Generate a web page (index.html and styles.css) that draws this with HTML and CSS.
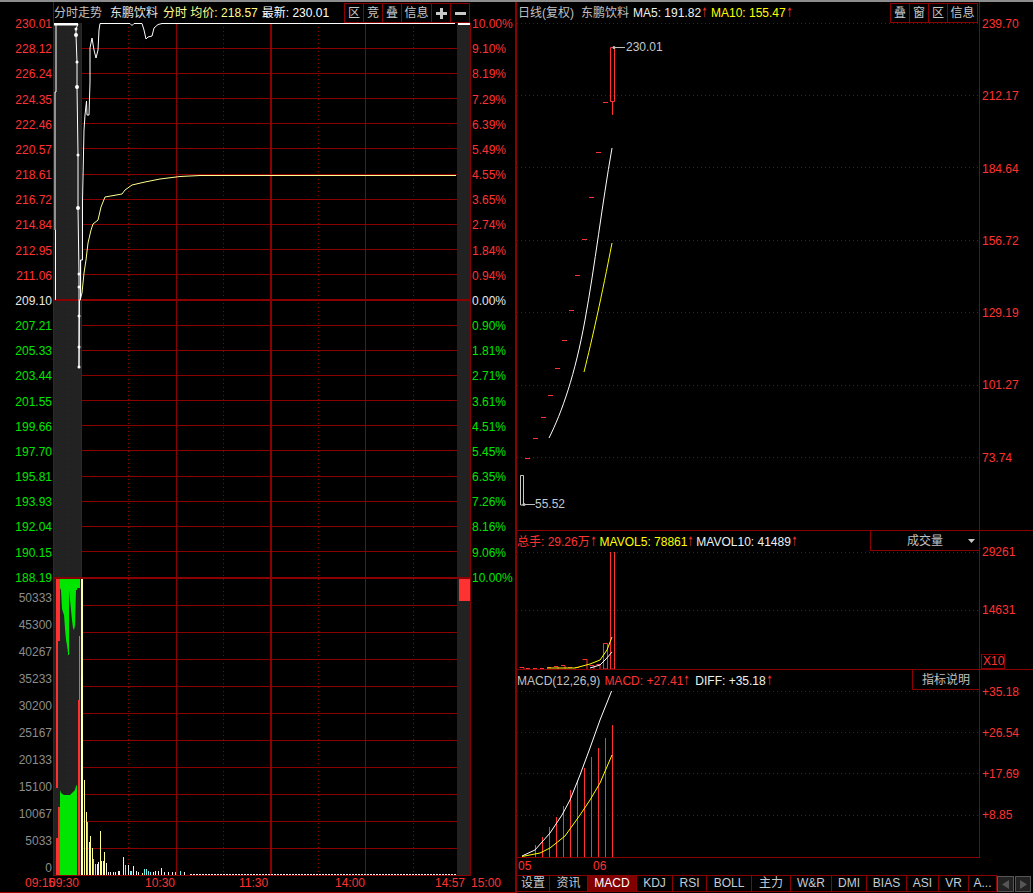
FILE: index.html
```html
<!DOCTYPE html>
<html lang="zh-CN">

<head>
    <meta charset="UTF-8">
    <meta name="viewport" content="width=device-width, initial-scale=1.0">
    <title>东鹏饮料</title>
    <link rel="stylesheet" href="styles.css">
</head>

<body>
    <div class="topbar"></div>
    <div class="terminal">

        <!-- partie gauche : intraday -->
        <section class="intraday">
            <div class="axis axis-left">
                <div class="axis-price">
                    <span class="up-text">230.01</span><span class="up-text">228.12</span><span class="up-text">226.24</span><span class="up-text">224.35</span><span class="up-text">222.46</span><span class="up-text">220.57</span><span class="up-text">218.61</span><span class="up-text">216.72</span><span class="up-text">214.84</span><span class="up-text">212.95</span><span class="up-text">211.06</span>
                    <span class="flat-text">209.10</span>
                    <span class="down-text">207.21</span><span class="down-text">205.33</span><span class="down-text">203.44</span><span class="down-text">201.55</span><span class="down-text">199.66</span><span class="down-text">197.70</span><span class="down-text">195.81</span><span class="down-text">193.93</span><span class="down-text">192.04</span><span class="down-text">190.15</span><span class="down-text">188.19</span>
                </div>
                <div class="axis-volume">
                    <span>50333</span><span>45300</span><span>40267</span><span>35233</span><span>30200</span><span>25167</span><span>20133</span><span>15100</span><span>10067</span><span>5033</span><span>0</span>
                </div>
            </div>

            <div class="intraday-main">
                <div class="chart-header">
                    <span class="title">分时走势</span>
                    <span class="stock">东鹏饮料</span>
                    <span class="avg">分时 均价: 218.57</span>
                    <span class="last">最新: 230.01</span>
                    <div class="btn-group">
                        <button class="btn">区</button>
                        <button class="btn">竞</button>
                        <button class="btn">叠</button>
                        <button class="btn btn-wide">信息</button>
                        <button class="btn"><svg width="11" height="11" viewBox="0 0 11 11"><path class="icon-fill" d="M4 0h3v4h4v3H7v4H4V7H0V4h4z"/></svg></button>
                        <button class="btn"><svg width="11" height="11" viewBox="0 0 11 11"><path class="icon-fill" d="M0 4h11v3H0z"/></svg></button>
                    </div>
                </div>

                <svg class="chart" width="417" height="853" viewBox="54 23 417 853">
                    <rect class="strip" x="54" y="23" width="27" height="853"/>
                    <rect class="strip" x="457" y="23" width="13" height="853"/>
                    <path class="grid-dot" d="M67.5 23V876M128.5 23V876M223.5 23V876M318.5 23V876M413.5 23V876"/>
                    <path class="grid" d="M81 48.5H457M81 73.5H457M81 98.5H457M81 123.5H457M81 148.5H457M81 174.5H457M81 199.5H457M81 224.5H457M81 249.5H457M81 274.5H457M81 325.5H457M81 350.5H457M81 375.5H457M81 400.5H457M81 425.5H457M81 450.5H457M81 476.5H457M81 501.5H457M81 526.5H457M81 551.5H457"/>
                    <path class="grid" d="M81 605.5H457M81 632.5H457M81 659.5H457M81 686.5H457M81 713.5H457M81 740.5H457M81 767.5H457M81 794.5H457M81 821.5H457M81 848.5H457M54 875.5H471"/>
                    <path class="grid" d="M81.5 23V876M176.5 23V876M365.5 23V876M470.5 23V876"/>
                    <path class="grid-thick" d="M54 300H471M54 578H471M271 23V876"/>

                    <!-- volumes -->
                    <rect class="fill-red" x="459" y="579" width="11" height="22"/>
                    <path class="fill-red" d="M56 579H60V641H58V788H56zM56 838H58V807H60V875H56zM78 579H80V584H78zM78 700H80V875H78z"/>
                    <path class="fill-green" d="M60 579H77V590H76L75 625 74 630 73 628 72 620 71 610 70 600 69 590V655H68V653L67 645 66 640 65 628 64 615 63 612 62 609 61 590 60 588z"/>
                    <path class="fill-green" d="M60 875V790L61 793 64 795H70L72 793 75 790 76 786 77 785V875zM77 579H80V588H77zM79 636H80V700H79z"/>
                    <rect class="fill-pale" x="81" y="579" width="2" height="296"/>
                    <rect class="fill-white" x="81" y="676" width="1" height="199"/>
                    <path class="bar-pale" d="M84.5 780V875M86.5 812V875M89.5 842V875M90.5 836V875M92.5 848V875M97.5 864V875M100.5 831V875M101.5 861V875M103.5 861V875M104.5 852V875M119.5 871V875M133.5 866V875M161.5 868V875M155.5 871V875M142.5 873V875"/>
                    <path class="bar-cyan" d="M87.5 822V875M93.5 859V875M95.5 864V875M125.5 865V875M130.5 871V875M131.5 871V875M144.5 869V875M146.5 869V875M148.5 871V875M150.5 872V875M175.5 872V875M180.5 871V875"/>
                    <path class="bar-white" d="M98.5 862V875M106.5 863V875M108.5 872V875M110.5 872V875M113.5 872V875M115.5 872V875M118.5 871V875M123.5 857V875M128.5 865V875M136.5 871V875M138.5 872V875M153.5 872V875M158.5 871V875M164.5 872V875M168.5 872V875M172.5 872V875M184.5 872V875"/>
                    <path class="bar-dash" d="M190 874.5H456"/>

                    <!-- prix et moyenne -->
                    <path class="line-avg" d="M80 300L82 293 84 273 86 260 88 243 91 230 93 224 98 220 101 207 105 197 122 194 125 190 132 185 145 182 160 179 180 176.5 200 175.5H456"/>
                    <path class="line-price" d="M55.5 300V230H55V92H56V24H78L76 29 76 35 77 62 77 87 78 154 78 208 79 274 79 287 79 316 79 347 79 367 79.5 300H80.5V260H82.5V201L84 130 85 115 86.5 101 87 115H89L90 82 90 48 92 38 94 50 96 58 98 50 99 30 100 23.5H130L132 25.5 134 23.5H142L144 30 146 39 148 37 152 36 154 28 158 24.5 162 23.5H455"/>
                    <path class="line-top" d="M54 24H78"/>
                    <path class="line-end" d="M458 24H470"/>
                    <g class="dots">
                        <circle cx="76" cy="29" r="1.5"/><circle cx="76" cy="35" r="2"/><circle cx="77" cy="62" r="1.5"/><circle cx="77" cy="87" r="2"/>
                        <circle cx="78" cy="155" r="1.5"/><circle cx="78" cy="208" r="2"/><circle cx="79" cy="274" r="1.5"/><circle cx="79" cy="287" r="1.5"/>
                        <circle cx="79" cy="316" r="1.5"/><circle cx="79" cy="347" r="1.5"/><circle cx="79" cy="367" r="1.5"/>
                    </g>
                </svg>
            </div>

            <div class="axis axis-right">
                <span class="up-text">10.00%</span><span class="up-text">9.10%</span><span class="up-text">8.19%</span><span class="up-text">7.29%</span><span class="up-text">6.39%</span><span class="up-text">5.49%</span><span class="up-text">4.55%</span><span class="up-text">3.65%</span><span class="up-text">2.74%</span><span class="up-text">1.84%</span><span class="up-text">0.94%</span>
                <span class="flat-text">0.00%</span>
                <span class="down-text">0.90%</span><span class="down-text">1.81%</span><span class="down-text">2.71%</span><span class="down-text">3.61%</span><span class="down-text">4.51%</span><span class="down-text">5.45%</span><span class="down-text">6.35%</span><span class="down-text">7.26%</span><span class="down-text">8.16%</span><span class="down-text">9.06%</span><span class="down-text">10.00%</span>
            </div>

            <div class="time-axis">
                <span>09:15</span><span>09:30</span><span>10:30</span><span>11:30</span><span>14:00</span><span>14:57</span><span>15:00</span>
            </div>
        </section>

        <!-- partie droite : journalier -->
        <section class="daily">
            <div class="pane pane-kline">
                <div class="plot">
                    <div class="chart-header">
                        <span class="title title-daily">日线(复权)</span>
                        <span class="title stock-daily">东鹏饮料</span>
                        <span class="ma-white">MA5: 191.82<i class="arrow">↑</i></span>
                        <span class="ma-yellow ma-gap">MA10: 155.47<i class="arrow">↑</i></span>
                        <div class="btn-group">
                            <button class="btn">叠</button>
                            <button class="btn">窗</button>
                            <button class="btn">区</button>
                            <button class="btn btn-wide">信息</button>
                        </div>
                    </div>
                    <svg class="chart" width="462" height="507" viewBox="517 23 462 507">
                        <path class="grid-dot" d="M517 23.5H979M517 95.5H979M517 167.5H979M517 240.5H979M517 312.5H979M517 385.5H979M517 457.5H979"/>
                        <path class="candle-first" d="M520.5 475.5H523.5V505H520.5z"/>
                        <path class="candle" d="M525 458.5H530M533 438.5H538M541 417.5H546M548 395.5H553M555 368.5H560M562 340.5H567M569 310.5H574M575 275.5H580M582 239.5H587M596 152.5H601M589 197.5H594M603 102.5H608"/>
                        <path class="candle" d="M610.5 47.5H614.5V101.5H610.5zM612.5 101.5V115"/>
                        <path class="line-ma5" d="M549 438C562 412 575 375 585 320C595 265 602 205 612 148"/>
                        <path class="line-ma10" d="M584 372C592 340 602 295 612 243"/>
                        <path class="leader" d="M614 47.5H625M524 504.5H535"/>
                        <circle class="leader-dot" cx="614" cy="47.5" r="1.5"/>
                        <circle class="leader-dot" cx="524" cy="504.5" r="1.5"/>
                        <text class="chart-label" x="626" y="51">230.01</text>
                        <text class="chart-label" x="535" y="508">55.52</text>
                    </svg>
                </div>
                <div class="axis axis-kline">
                    <span>239.70</span><span>212.17</span><span>184.64</span><span>156.72</span><span>129.19</span><span>101.27</span><span>73.74</span>
                </div>
            </div>

            <div class="pane pane-volume">
                <div class="plot">
                    <div class="chart-header">
                        <span class="up-text">总手: 29.26万<i class="arrow">↑</i></span>
                        <span class="ma-yellow">MAVOL5: 78861<i class="arrow">↑</i></span>
                        <span class="ma-white">MAVOL10: 41489<i class="arrow">↑</i></span>
                        <div class="select">成交量<svg class="select-caret" width="7" height="4" viewBox="0 0 7 4"><path class="icon-fill" d="M0 0h7L3.5 4z"/></svg></div>
                    </div>
                    <svg class="chart" width="462" height="117" viewBox="517 552 462 117">
                        <path class="grid-dot" d="M517 552.5H979M517 610.5H979"/>
                        <path class="candle" d="M519.5 667.5H524V669M526 668.5H530M533 668.5H537M540 668.5H544M547 667.5H551M554 666.5H558V669M561 665.5H565V669M568 667.5H572M575 667.5H579M582.5 659.5H587V669M589.5 665.5H594V669M596.5 664.5H600V669M603.5 643.5H607.5V669H603.5zM610.5 551.5H614.5V669H610.5z"/>
                        <path class="line-ma10" d="M547 668H575L590 664 600 660 607 650 612 637"/>
                        <path class="line-ma5" d="M590 668L600 665 606 659 612 652"/>
                    </svg>
                </div>
                <div class="axis axis-vol">
                    <span>29261</span><span>14631</span>
                    <span class="scale-box">X10</span>
                </div>
            </div>

            <div class="pane pane-macd">
                <div class="plot">
                    <div class="chart-header">
                        <span class="title">MACD(12,26,9)</span>
                        <span class="up-text">MACD: +27.41<i class="arrow">↑</i></span>
                        <span class="ma-white">DIFF: +35.18<i class="arrow">↑</i></span>
                        <div class="select select-info">指标说明</div>
                    </div>
                    <svg class="chart" width="462" height="166" viewBox="517 691 462 166">
                        <path class="grid-dot" d="M517 691.5H979M517 732.5H979M517 773.5H979M517 815.5H979"/>
                        <path class="candle" d="M535.5 845V857M542.5 837V857M549.5 827V857M556.5 817V857M563.5 806V857M570.5 790V857M577.5 780V857M584.5 768V857M591.5 757V857M598.5 748V857M605.5 738V857M612.5 725V857"/>
                        <path class="line-ma5" d="M522 856L535 850 550 833 562 815 570 800 580 775 590 748 600 720 612 690"/>
                        <path class="line-ma10" d="M522 856.5L540 853 550 848 565 836 580 815 590 800 600 783 612 755"/>
                    </svg>
                </div>
                <div class="axis axis-macd">
                    <span>+35.18</span><span>+26.54</span><span>+17.69</span><span>+8.85</span>
                </div>
            </div>

            <div class="date-axis"><span>05</span><span>06</span></div>

            <div class="tabs">
                <span class="tab">设置</span>
                <span class="tab">资讯</span>
                <span class="tab active">MACD</span>
                <span class="tab">KDJ</span>
                <span class="tab">RSI</span>
                <span class="tab">BOLL</span>
                <span class="tab">主力</span>
                <span class="tab">W&amp;R</span>
                <span class="tab">DMI</span>
                <span class="tab">BIAS</span>
                <span class="tab">ASI</span>
                <span class="tab">VR</span>
                <span class="tab">A...</span>
                <span class="scroll-btn"><svg width="9" height="9" viewBox="0 0 9 9"><path class="icon-dim" d="M8 0v9L1 4.5z"/></svg></span>
                <span class="scroll-btn"><svg width="9" height="9" viewBox="0 0 9 9"><path class="icon-dim" d="M1 0v9l7-4.5z"/></svg></span>
            </div>
        </section>
    </div>
</body>

</html>
```

FILE: styles.css
```css
* {
    box-sizing: border-box;
}

body {
    margin: 0;
    width: 1033px;
    height: 893px;
    overflow: hidden;
    background: #000;
    color: #c0c0c0;
    font: 12px/14px "Liberation Sans", "Noto Sans CJK SC", sans-serif;
}

.topbar {
    height: 2px;
    background: #8c8c8c;
}

.terminal {
    display: flex;
    height: 891px;
}

/* couleurs de texte */
.up-text {
    color: #ff3232;
}

.down-text {
    color: #00e600;
}

.flat-text {
    color: #e8e8e8;
}

.ma-white {
    color: #f0f0f0;
}

.ma-yellow {
    color: #ffff00;
}

.arrow {
    display: inline-block;
    margin: 0 -1px 0 -2px;
    color: #ff3232;
    font: 13px/14px "DejaVu Sans", sans-serif;
    transform: scaleX(0.55);
}

/* intraday */
.intraday {
    display: grid;
    grid-template-columns: 54px 417px 46px;
    grid-template-rows: 874px 17px;
    width: 517px;
    border-right: 2px solid #8b0000;
}

.axis {
    display: flex;
    flex-direction: column;
}

.axis span {
    display: block;
    flex: none;
    height: 14px;
}

.axis-left {
    padding: 15px 1px 0 0;
    border-right: 1px solid #8b0000;
    text-align: right;
}

.axis-price {
    display: flex;
    flex-direction: column;
    gap: 11.18px;
}

.axis-volume {
    display: flex;
    flex-direction: column;
    gap: 13px;
    margin-top: 6px;
    color: #8c8c8c;
}

.axis-right {
    gap: 11.18px;
    padding: 15px 0 0 1px;
}

.chart {
    display: block;
}

.chart-header {
    display: flex;
    align-items: center;
    height: 21px;
    white-space: nowrap;
}

.intraday .chart-header,
.pane-kline .chart-header {
    padding-top: 1px;
}

.stock {
    margin-left: 8px;
    color: #e4e4e4;
}

.avg {
    margin-left: 5px;
    color: #ffff90;
}

.last {
    margin-left: 4px;
    color: #fff;
}

.btn-group {
    display: flex;
    align-self: flex-start;
    margin: 0 1px 0 auto;
}

.btn {
    display: flex;
    align-items: center;
    justify-content: center;
    width: 20px;
    height: 20px;
    margin-left: -1px;
    padding: 0;
    border: 1px solid #8b0000;
    background: none;
    color: #c8c8c8;
    font: inherit;
}

.btn-wide {
    width: 31px;
}

.icon-fill {
    fill: #c8c8c8;
}

.icon-dim {
    fill: #555;
}

.time-axis {
    grid-column: 1 / -1;
    display: grid;
    grid-template-columns: 24px 96px 94px 96px 100px 36px auto;
    height: 17px;
    padding-left: 25px;
    border-bottom: 1px solid #a00000;
    color: #ff3232;
    line-height: 15px;
}

/* tracés svg */
.strip {
    fill: #222;
}

.grid,
.grid-thick,
.grid-dot,
.bar-pale,
.bar-cyan,
.bar-white,
.bar-dash,
.candle,
.candle-first,
.leader,
.line-avg,
.line-price,
.line-ma5,
.line-ma10,
.line-top,
.line-end {
    fill: none;
}

.grid {
    stroke: #8b0000;
}

.grid-thick {
    stroke: #8b0000;
    stroke-width: 2;
}

.grid-dot {
    stroke: #8b0000;
    stroke-dasharray: 1 3;
}

.fill-red {
    fill: #ff3232;
}

.fill-green {
    fill: #00e600;
}

.fill-pale {
    fill: #ffffa0;
}

.fill-white {
    fill: #fff;
}

.bar-pale {
    stroke: #ffff90;
}

.bar-cyan {
    stroke: #70f0f0;
}

.bar-white {
    stroke: #f0f0f0;
}

.bar-dash {
    stroke: #f0f0f0;
    stroke-dasharray: 2 1;
}

.line-avg {
    stroke: #ffff90;
}

.line-price {
    stroke: #fff;
}

.line-top {
    stroke: #fff;
    stroke-width: 3;
}

.line-end {
    stroke: #fff;
    stroke-width: 2;
}

.dots {
    fill: #fff;
}

.candle {
    stroke: #ff3232;
}

.candle-first {
    stroke: #c8c8c8;
}

.line-ma5 {
    stroke: #fff;
}

.line-ma10 {
    stroke: #ffff00;
}

.leader {
    stroke: #c0c0c0;
}

.leader-dot {
    fill: #c0c0c0;
}

.chart-label {
    fill: #c0c8d0;
    font: 12px "Liberation Sans", sans-serif;
}

/* journalier */
.daily {
    display: flex;
    flex-direction: column;
    width: 516px;
}

.pane {
    display: grid;
    grid-template-columns: 463px 53px;
}

.pane-kline {
    height: 529px;
    border-bottom: 1px solid #8b0000;
}

.pane-volume {
    height: 139px;
    border-bottom: 1px solid #8b0000;
}

.pane-macd {
    height: 188px;
}

.plot {
    border-right: 1px solid #8b0000;
}

.pane-macd .plot {
    border-bottom: 1px solid #8b0000;
}

.pane .chart-header {
    gap: 2px;
}

.pane-kline .chart-header {
    gap: 0;
    padding-left: 1px;
}

.pane-volume .ma-white {
    margin-left: -1px;
}

.pane-macd .up-text {
    margin-left: 2px;
}

.pane-macd .ma-white {
    margin-left: 2px;
}

.stock-daily {
    margin-left: 7px;
    margin-right: 4px;
}

.ma-gap {
    margin-left: 2px;
}

.select {
    display: flex;
    position: relative;
    align-items: center;
    align-self: flex-start;
    justify-content: center;
    width: 109px;
    height: 20px;
    margin-left: auto;
    border-bottom: 1px solid #8b0000;
    border-left: 1px solid #8b0000;
}

.select-info {
    width: 67px;
}

.select-caret {
    position: absolute;
    top: 8px;
    right: 4px;
}

.axis-kline,
.axis-vol,
.axis-macd {
    padding: 14px 0 0 2px;
    color: #ff3232;
}

.axis-kline {
    gap: 58.3px;
    padding-top: 15px;
}

.axis-vol {
    gap: 44px;
}

.axis-vol .scale-box {
    width: 24px;
    height: 15px;
    margin: -7px 0 0 -1px;
    padding-left: 1px;
    border: 1px solid #8b0000;
    line-height: 13px;
}

.axis-macd {
    gap: 27.2px;
    padding-top: 14.5px;
}

.date-axis {
    display: grid;
    grid-template-columns: 75px auto;
    height: 17px;
    padding-left: 1px;
    color: #ff3232;
    line-height: 16px;
}

.tabs {
    display: grid;
    grid-template-columns: 33px 38px 49px 36px 34px 45px 39px 41px 35px 40px 32px 30px 28px 18px 17px;
    height: 17px;
    line-height: 15px;
    white-space: nowrap;
}

.tab {
    border-top: 1px solid #8b0000;
    border-right: 1px solid #8b0000;
    border-bottom: 1px solid #8b0000;
    color: #c4ccd4;
    text-align: center;
}

.tab.active {
    background: #800000;
    color: #fff;
}

.scroll-btn {
    display: flex;
    align-items: center;
    justify-content: center;
    margin: 1px 1px 0 0;
    border: 1px solid #555;
    background: #222;
}
```
